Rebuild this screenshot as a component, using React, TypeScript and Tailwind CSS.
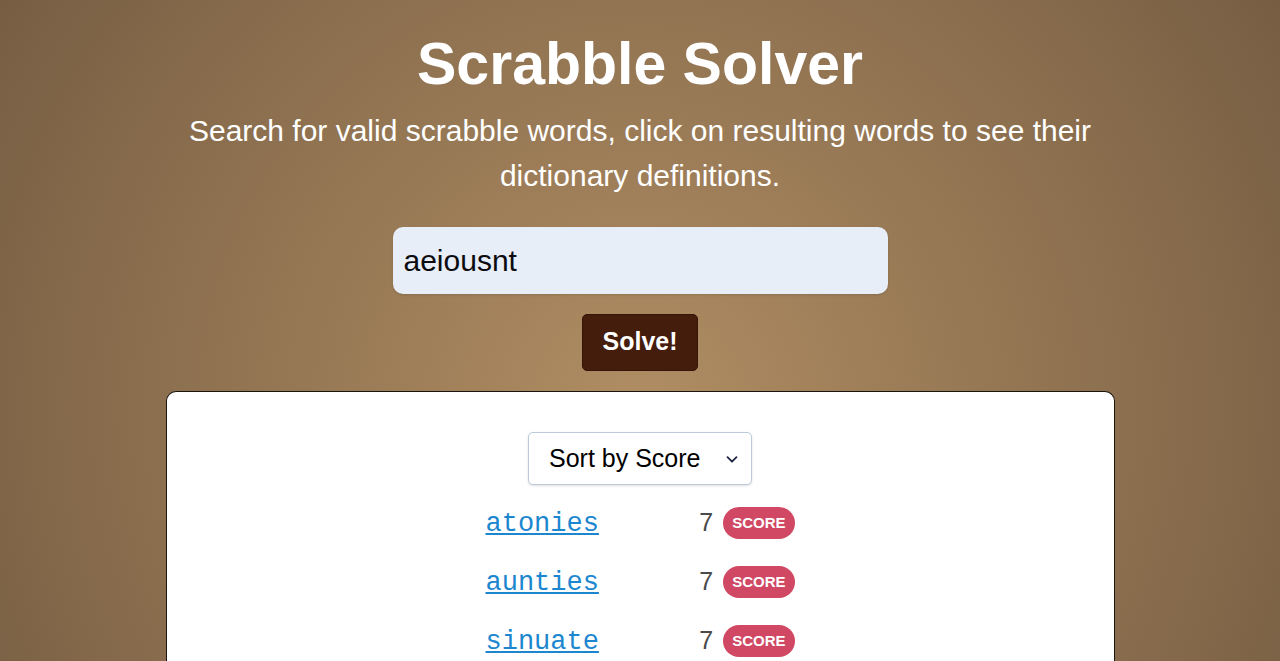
const words = [
  { word: "atonies", score: 7 },
  { word: "aunties", score: 7 },
  { word: "sinuate", score: 7 },
];

export default function App() {
  return (
    <main className="flex h-screen flex-col items-center overflow-hidden bg-[radial-gradient(circle_at_center_62%,#b08d63_0%,#775e43_100%)] px-6 pt-8 font-['Liberation_Sans',Arial,sans-serif] text-white">
      <h1 className="text-[59px] leading-[64px] font-bold">Scrabble Solver</h1>
      <p className="mt-3 max-w-[950px] text-center text-[30px] leading-[45px]">
        Search for valid scrabble words, click on resulting words to see their dictionary definitions.
      </p>
      <form className="mt-[29px] flex w-full flex-col items-center gap-5" onSubmit={(e) => e.preventDefault()}>
        <input
          aria-label="Letters"
          defaultValue="aeiousnt"
          className="h-[67px] w-full max-w-[495px] rounded-[10px] bg-[#e8eef7] px-[11px] text-[30px] text-[#0c0c10] shadow outline-none"
        />
        <button className="h-[57px] rounded-[5px] border border-[#32140a] bg-[#451d0d] px-[19px] pb-0.5 text-[25px] font-bold">
          Solve!
        </button>
      </form>
      <section className="mt-5 flex w-full max-w-[949px] flex-1 shrink-0 flex-col items-center rounded-t-[10px] border border-b-0 border-[#1b1510] bg-white pt-10 text-[#4a4a4a]">
        <div className="relative flex">
          <select
            aria-label="Sort order"
            className="h-[53px] w-[224px] appearance-none rounded-[5px] border border-[#bccadb] bg-white pl-5 text-[25px] text-black shadow"
          >
            <option>Sort by Score</option>
          </select>
          <svg
            className="pointer-events-none absolute top-6 right-3.5"
            width="12"
            height="8"
            viewBox="0 0 12 8"
            fill="none"
            stroke="#1f2440"
            strokeWidth="1.8"
            strokeLinecap="round"
            strokeLinejoin="round"
          >
            <path d="M1.5 1.2l4.5 4.5 4.5-4.5" />
          </svg>
        </div>
        <ul className="mt-[22px] flex w-full max-w-[309px] flex-col gap-[27px]">
          {words.map(({ word, score }) => (
            <li key={word} className="flex h-8 items-center">
              <a
                href="#"
                className="pt-0.5 font-['Liberation_Mono',monospace] text-[27px] text-[#1c87cf] underline decoration-2 underline-offset-2"
              >
                {word}
              </a>
              <span className="ml-auto text-[25px]">{score}</span>
              <span className="ml-2.5 flex h-8 items-center rounded-full bg-[#d04863] px-[9px] text-[15px] font-bold text-white">
                SCORE
              </span>
            </li>
          ))}
        </ul>
      </section>
    </main>
  );
}
